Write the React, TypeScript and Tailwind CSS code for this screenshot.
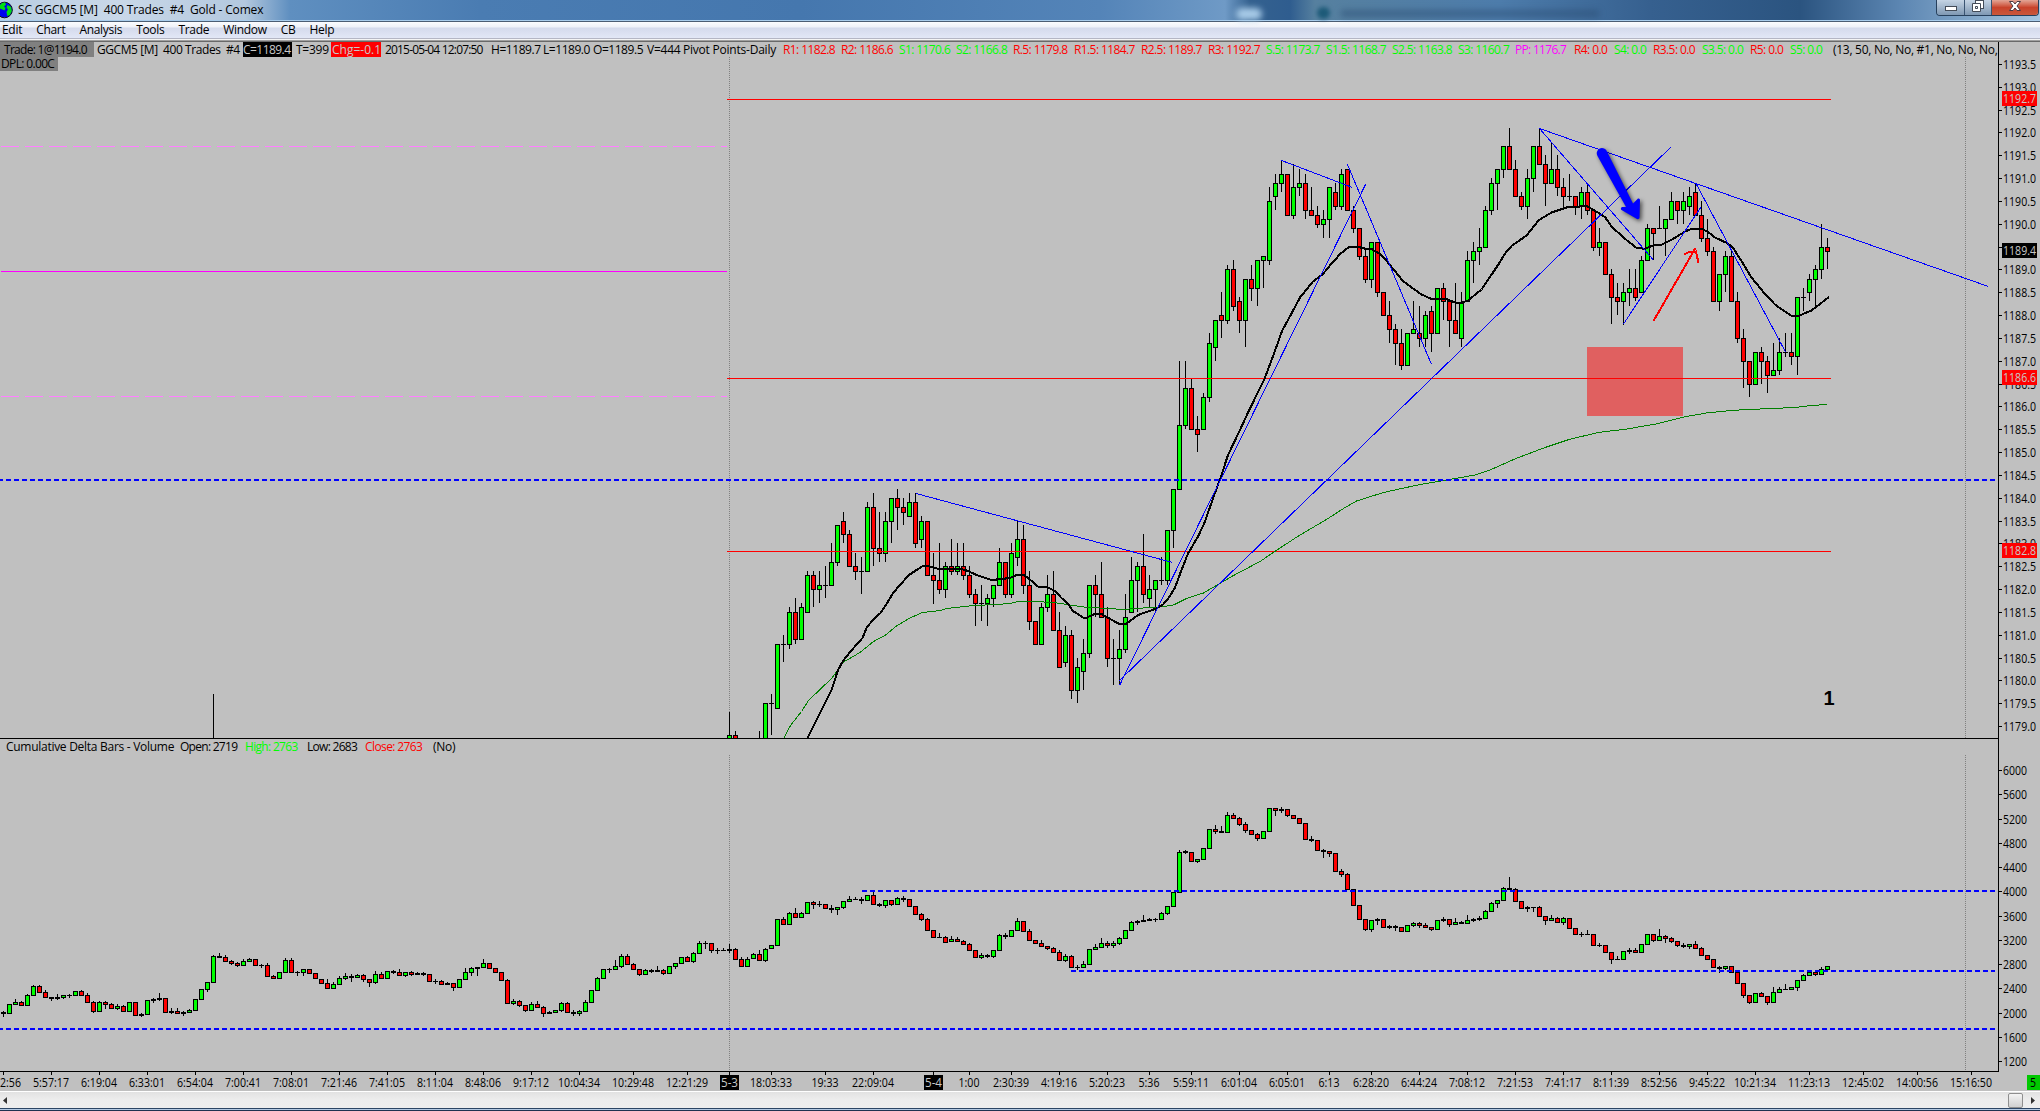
import React from 'react';

type Bar = { x: number; up: boolean; top: number; bottom: number; high: number; low: number };

const BAR_STEP = 6;
const FIRST_BAR = 3;

// "g823,850,820,853" = colour, body top, body bottom, high, low (thirds of a pixel)
const parseBars = (start: number, base: number, raw: string): Bar[] =>
  raw
    .trim()
    .split(/\s+/)
    .map((token, i) => {
      const [top, bottom, high, low] = token.slice(1).split(',').map((v) => (v ? Number(v) : undefined));
      return {
        x: FIRST_BAR + (start + i) * BAR_STEP,
        up: token[0] === 'g',
        top: base + Math.floor(top! / 3),
        bottom: base + Math.floor(bottom! / 3) + 1,
        high: base + Math.floor((high ?? top!) / 3),
        low: base + Math.ceil((low ?? bottom!) / 3),
      };
    });

const priceBars: Bar[] = [
  ...parseBars(121, 460, `g826,840,756 r826,840,813`),
  ...parseBars(
    126,
    460,
    `d838,838,813 g730,840 d730,730,702,825 g553,745 d553,553,525,606 g457,553,441,567 r457,538,414,552
    g442,538,429 g346,457,333 r346,388,333,441 g376,388,333,429 d376,376,318,414 g307,376,249 g196,307,,318
    r184,223,156,249 r223,319,210 r319,334,279,360 d334,334,291,402 g142,334,126 r142,265,99,318
    r265,280,156,306 g184,280,156,306 g115,184,,249 r115,142,87,210 r142,157,114,195 g127,169,99
    r127,250,99,264 g184,238,168,264 r184,346 r346,361,279,430 r361,388,249,402 g319,388,306,414
    r319,334,237,345 g319,334,249,345 r319,346,249,360 r346,403,318,414 r403,430,387,498 d430,430,375,483
    g415,430,402,498 g376,415,,441 g307,376,264 r307,403,,414 g280,403,249,414 g238,292,183,318
    r238,376,195,402 r376,484,333,510 r484,553 g442,553,429 g403,442,345,456 r403,511,333 r511,622,456
    g526,607,498,621 r526,691,510,717 g622,691,594,729 g580,634,537,690 g376,580,,594 r376,403,345,471
    r403,472,306 r472,595,441,621`,
  ),
  ...parseBars(
    185,
    340,
    `d955,955,897,1035 g928,955,870,1035 g832,928,762,939 g721,817,651 g679,721,666,816 r679,763,582,789
    g748,775,705,804 g721,748,,813 d721,721,651,735 g571,721,,735 g448,571,,624 g256,448,63 g145,256,63,267
    r145,268,118 r268,283,228,336 g172,268,159 g10,172,-21,186`,
  ),
  ...parseBars(
    202,
    120,
    `g601,682,,723 r586,601,516,654 g448,601,435,612 r448,559,420,573 r544,601,531,639 g478,601,,681
    r478,505,435,543 g421,505,,558 g409,421,,504 g244,421,201,435 g190,229,162,270 g163,190,121,216 r163,286
    g202,286,132,297 g190,202,147,228 r190,271,162,297 r271,286,201 r286,313,258,324 g298,313,270,354
    g202,298,,354 r217,259,189,270 g163,259,147,270 r148,271 r271,325,258,339 r325,409,,420 r409,478,390,489
    g367,478,,504 r367,517,,531 r517,586 r586,628,543,669 r628,670,612,735 r670,736,627,750 g640,736
    g628,640,543 r640,655,558,681 g586,655,573,681 r574,640,558,696 g505,640 r505,544,489,600 r544,601,,681
    r601,640,489 g550,655,516,681 g421,544,393 g394,421,366,489 g382,394,324,435 g271,382,258
    g190,271,174,285 g148,190,,270 g79,148,,174 r79,148,24 r148,229,120 r229,259,216,270 g175,259,147,297
    g79,175,,216 r79,133,24 r133,190,105,258 g148,190,66 r148,202,105,228 r202,229,174,264 d229,229,162,243
    r229,262,,285 g217,260,201,297 r217,271,189,285 r271,382,,393 g367,382,324,408 r367,463 r463,532,447,612
    r532,544,489,585`,
  ),
  ...parseBars(
    270,
    110,
    `g547,574,519,643 g535,547,477,588 r535,562,477,573 g451,547,438 g355,451,342 r355,370,,450 d355,355,288
    g328,355,,438 g274,328,246 r274,301,,342 g274,301,246,342 g259,289,231,315 r247,316,219 r316,385,273,396
    r385,424,327,438 r424,574,411 g493,574,,603 g439,493,423,546 r439,574,420 r574,685,546,699
    r685,754,657,834 r754,823,,861 g727,823 r727,754,711,822 r754,796,738,849 g781,796,699 g727,781,684,795
    d727,727,669,739 r727,739,669,765 g562,739,,795 d562,562,534,603 g508,547,492,573 g478,508,465,591
    g412,478,342,507 r412,424,384,477`,
  ),
];

const deltaBars: Bar[] = [
  ...parseBars(
    0,
    730,
    `d847,850,843,861 g823,850 g817,823,807 r817,826,813 g796,826,792 g769,796,765 r769,787,765 r787,802,780
    d802,805,,813 d801,804,792,810 g796,802,,807 d796,796,792,804 g784,796 r784,796,780 r796,817,790
    r817,844,813,849 g817,844,813 r817,823,813,837 r823,835,819 g829,835,822,840 r829,844,825 g817,844
    r817,856 d853,856,849,861 g811,853 d808,811,804,819 d805,808,789,813 r805,847 d844,847,835,852
    r844,850,834 d847,850,844,858 g841,847,838 g808,841 g778,808 g757,778,,786 g679,757,676 d679,682,669
    r682,694,676 r694,700,690,705 r700,706,696,711 g694,706,687 g688,694,684 r688,706 d706,706,702,714
    r706,739,699 r739,745,735 g727,745 g691,727,684 r691,727,684 d727,727,723,738 g718,727,,738 r718,730
    r730,745 r748,760 r760,775,747 g763,775,757 g745,763,738 g739,745,729,750 d739,742,732,756 g736,742,732
    r736,748,732,756 r748,757,,771 g733,757,723,762 r733,745,726 g724,745 d724,727,720,732 r727,736,717
    g727,736,,740 r727,733,723,738 d730,733,726 d730,733,726,738 r733,754 d754,754,748,760 r754,763,750
    d760,763,756 r760,772,,783 g748,772 g727,748,714 g715,727,711,736 d712,715,,738 g700,712,687 r700,715
    r715,727 r727,751 r751,820,747 g814,820,808,825 r814,826,810,831 r826,841,,846 g823,841,817 r823,832,814
    r832,850,828,861 d847,850,843 g841,847 g820,841,816,846 r820,847,816 d847,850,840,858 g844,850,840,856
    g817,844,810 g781,817 g745,781,741 g718,745 d718,718,714,729 g709,718,690 g679,709,672,714 r679,703,672
    r703,718,699 r718,733,,738 g721,733,717 d721,724,717,729 d721,724,708 r721,730,717,735 g709,730
    g700,709,,717 g682,700 r682,694,678 g670,694,666,699 g640,670,633 d640,640,633,657 r640,661,,667
    d661,661,654,672`,
  ),
  ...parseBars(
    120,
    790,
    `d481,481,474 d478,481,462,489 r478,508,474 r508,529,502 g508,529,502 g493,505,489 r493,511,480
    g478,511,474,516 g466,475 g388,466 r388,403,381 g370,403,366 r370,382,354 g370,382,366 g337,370
    r337,343,333,357 d343,343,333,349 r343,355 d355,358,345,369 g352,358,,375 g334,352,,357 g328,334,318
    d328,328,321 d328,331,321,342 g316,331 r316,343,303 d343,346,339,351 g331,346,,354 r331,343,,348
    g325,343,321 d325,328,318,336 r328,349 r349,373 r373,388,369,393 r388,421,384 r421,442 d442,442,429
    r442,457,438 g448,454,438 r448,454,441 r454,463,450 r463,481,459 r481,502 g496,502,489,507
    d496,499,492,504 g481,499,,504 g436,481,432 d436,439,429,447 g421,439 g394,421,384 r394,424 r424,451,417
    r451,460 r460,469,450 r469,475,,480 r475,487,471 r487,511,480 g499,511,492,516 r499,532,496
    d532,532,525,540 g523,532,513 g478,523 g472,478,462 g460,472,444 r460,466,453,474 g460,466,453,474
    g445,460,441,465 g421,445 g397,421,393 d394,397,390,405 d391,394,375 d388,391,384 d388,388,384,396
    g370,388,366 g349,370,,375 g307,349 g187,307,180 d184,187,180,192 r187,214 g208,214,,219 g175,208
    g118,175 r118,124,105,132 d124,127,108 g76,127,66 r76,85,69 r85,103,81,108 r103,121,96,129 r121,133
    r133,145,129,153 g124,145 g55,124 r55,61,,78 d58,61,51,67 r58,76,,81 r76,85 r85,100 r100,148
    d148,151,138,156 r151,181 d181,184,177,204 r184,190,,201 r190,244 r244,253,237,261 r253,298,249 r298,346
    r346,388 r388,418,,423 g391,418,,426 d388,391,384,405 r388,412 d409,412,405,417 d409,412,405,423
    r412,424 g406,424 g400,406,396,411 r400,406,396,414 r406,412,400 r412,418,,423 g391,418 d388,391,381,396
    r388,403,,410 g397,403,384 d397,400,393 g391,400,375 d388,391,384,396 d385,388,378,393 g364,385,360
    g340,364,336 g331,340,,354 g295,331,291 d295,298,261 r298,334,294 r334,355 d352,355,348,366
    d352,352,,366 r352,379,348 r379,391,,405 g385,391,375 r385,397,381 g385,397,381,405 r385,415 r415,433
    d433,433,426,441 d433,433,420 r433,466 d466,466,459,471 r466,487 r487,508,,522 d508,508,498`,
  ),
  ...parseBars(
    270,
    680,
    `g814,838 d811,814,805,820 r811,817,804 g793,817 g763,793 r763,781,,786 g769,781,747 r769,775,765,789
    r775,784,771,789 r784,796,,801 d796,799,790,804 g793,799,,807 r793,805,783 r805,826,801 r826,838
    r838,862 d862,865,858,879 g859,865,,870 r859,877 r877,910 r910,946,,954 r946,967,,972 g940,967
    r940,949,936 r949,967,,975 g937,967,921 g928,937,921 d928,928,912 g922,928 g901,922,,933 g886,901,882
    g877,886,874 r877,883,873,888 g868,883,861 g859,868`,
  ),
];

const fastAverage =
  '807.5,738 815,723 831.5,690 838,670 843,661 850,652 862.5,638 867,627 873,620 880.5,613 886,605 893,593 900,585 909,575 916.5,570 923,566 927,565.5 933,567.5 941.5,569.5 950,568.5 960,568.5 968,571 976.5,575 990,579.5 996.5,579.5 1010,578 1016.5,575 1024,575 1030.5,580 1038,586.5 1048,587.5 1055,591 1061.5,598 1067,602.5 1073,611 1083,617.5 1087,617.5 1093.5,614.5 1101.5,614 1108,618 1118.5,623.5 1126.5,623.5 1138,615 1156.5,608.5 1163,604.5 1168,599 1175,587.5 1181.5,570 1188,553.5 1198,536.5 1204,524 1213,498.5 1221.5,475 1228,455 1240,430 1248,412.5 1264.5,379 1273.5,355 1282,331 1288,320 1300,297.5 1313,281.5 1323,274 1331.5,263.5 1335,260 1340,254 1349,247 1358.5,247 1366.5,249 1371.5,249 1381.5,255 1390,265 1402.5,280.5 1413,288.5 1421.5,294.5 1431.5,299 1445,298.5 1455,302.5 1461.5,302.5 1468,300.5 1481.5,289.5 1493,272.5 1500,262 1505,253.5 1511.5,246 1526.5,235.5 1539,220 1551.5,212.5 1566.5,207.5 1586.5,206 1593,209.5 1605,217 1611.5,226.5 1624,238 1636,247.5 1644.5,249 1653,245.5 1662,244.5 1672,239.5 1686,231 1693,228.5 1701.5,228.5 1708,232 1715,237.5 1727,243 1732.5,247 1743,263.5 1751.5,277.5 1765,294 1775.5,305 1791,315.5 1799.5,315.5 1811.5,310.5 1829,297';

const slowAverage =
  '784,738 790.5,725.5 801.5,711.5 808.5,700.5 831.5,678.5 843.5,662 860,652.5 873.5,641.5 885,635.5 896.5,626 910,618 922.5,612.5 940,610.5 946.5,608.5 973.5,605.5 996.5,604.5 1010,603.5 1018.5,601.5 1033.5,601.5 1053.5,602.5 1083.5,607 1123.5,609.5 1135,608.5 1160,607 1173.5,605 1186.5,598.5 1203.5,593 1233.5,575.5 1260,561.5 1280,548 1300,535 1326.5,519.5 1343.5,508.5 1356.5,501 1383.5,492.5 1420,484.5 1444,480.5 1475,475 1490,470 1516,458.5 1545,447.5 1569,439.5 1598,432.5 1627,429 1658.5,423.5 1686,416.5 1706.5,413 1730.5,410.5 1748,409.5 1772,408.5 1794.5,407.5 1811.5,405.5 1827,404.5';

const trendLines = [
  [916, 493.5, 1172.5, 562.5],
  [1119.5, 685.5, 1365.5, 184.5],
  [1119.5, 680.5, 1671, 147],
  [1281.5, 160.5, 1352.5, 187.5],
  [1347.5, 164.5, 1431.5, 364.5],
  [1539.5, 128.5, 1988.5, 286.5],
  [1539.5, 128.5, 1653, 259.5],
  [1623.5, 324, 1701, 207],
  [1696, 183.5, 1785.5, 352],
];

const timeLabels: [number, string][] = [
  [51, '5:57:17'], [99, '6:19:04'], [147, '6:33:01'], [195, '6:54:04'], [243, '7:00:41'], [291, '7:08:01'],
  [339, '7:21:46'], [387, '7:41:05'], [435, '8:11:04'], [483, '8:48:06'], [531, '9:17:12'], [579, '10:04:34'],
  [633, '10:29:48'], [687, '12:21:29'], [771, '18:03:33'], [825, '19:33'], [873, '22:09:04'], [969, '1:00'],
  [1011, '2:30:39'], [1059, '4:19:16'], [1107, '5:20:23'], [1149, '5:36'], [1191, '5:59:11'], [1239, '6:01:04'],
  [1287, '6:05:01'], [1329, '6:13'], [1371, '6:28:20'], [1419, '6:44:24'], [1467, '7:08:12'], [1515, '7:21:53'],
  [1563, '7:41:17'], [1611, '8:11:39'], [1659, '8:52:56'], [1707, '9:45:22'], [1755, '10:21:34'],
  [1809, '11:23:13'], [1863, '12:45:02'], [1917, '14:00:56'], [1971, '15:16:50'],
];

const dayLabels: [number, string][] = [[729, '5-3'], [933, '5-4']];

const priceLabels = Array.from({ length: 30 }, (_, i) => ({
  text: (1193.5 - i * 0.5).toFixed(1),
  y: Math.round(64 + i * 22.83),
}));

const deltaLabels = Array.from({ length: 13 }, (_, i) => ({
  text: String(6000 - i * 400),
  y: Math.round(770 + i * 24.25),
}));

const priceTags = [
  { y: 99, text: '1192.7', color: '#ff0000' },
  { y: 251, text: '1189.4', color: '#000000' },
  { y: 378, text: '1186.6', color: '#ff0000' },
  { y: 551, text: '1182.8', color: '#ff0000' },
];

const RED = 'text-[#ff0000] tracking-[-0.6px]';
const GREEN = 'text-[#00ff00] tracking-[-0.6px]';

// [slot width, text, classes]
const studyFields: [number, string, string][] = [
  [146, 'GGCM5 [M]\u00a0 400 Trades\u00a0 #4', 'tracking-[-0.42px]'],
  [49, 'C=1189.4', 'bg-black text-[#c8c8c8] tracking-[-0.55px]'],
  [39, 'T=399', 'pl-1 tracking-[-0.25px]'],
  [50, 'Chg=-0.1', 'bg-[#ff0000] text-[#c8c8c8] pl-px tracking-[0px]'],
  [110, '2015-05-04 12:07:50', 'pl-1 tracking-[-0.82px]'],
  [52, 'H=1189.7', 'tracking-[-0.45px]'],
  [50, 'L=1189.0', 'tracking-[-0.45px]'],
  [54, 'O=1189.5', 'tracking-[-0.45px]'],
  [36, 'V=444', 'tracking-[-0.25px]'],
  [100, 'Pivot Points-Daily', 'tracking-[-0.22px]'],
  [58, 'R1: 1182.8', RED],
  [58, 'R2: 1186.6', RED],
  [57, 'S1: 1170.6', GREEN],
  [57, 'S2: 1166.8', GREEN],
  [61, 'R.5: 1179.8', RED],
  [67, 'R1.5: 1184.7', RED],
  [67, 'R2.5: 1189.7', RED],
  [58, 'R3: 1192.7', RED],
  [60, 'S.5: 1173.7', GREEN],
  [66, 'S1.5: 1168.7', GREEN],
  [66, 'S2.5: 1163.8', GREEN],
  [57, 'S3: 1160.7', GREEN],
  [59, 'PP: 1176.7', 'text-[#ff00ff] tracking-[-0.7px]'],
  [40, 'R4: 0.0', RED],
  [39, 'S4: 0.0', GREEN],
  [49, 'R3.5: 0.0', RED],
  [48, 'S3.5: 0.0', GREEN],
  [40, 'R5: 0.0', RED],
  [43, 'S5: 0.0', GREEN],
  [166, '(13, 50, No, No, #1, No, No, No,', 'tracking-[-0.28px]'],
];

const deltaFields: [number, string, string][] = [
  [174, 'Cumulative Delta Bars - Volume', 'tracking-[-0.28px]'],
  [65, 'Open: 2719', 'tracking-[-0.72px]'],
  [62, 'High: 2763', 'text-[#00ff00] tracking-[-0.68px]'],
  [58, 'Low: 2683', 'tracking-[-0.7px]'],
  [68, 'Close: 2763', 'text-[#ff0000] tracking-[-0.6px]'],
  [40, '(No)', 'tracking-[-0.3px]'],
];

// digits are 6px wide, punctuation 3px
const labelWidth = (text: string) => [...text].reduce((sum, c) => sum + (/\d/.test(c) ? 6 : 3), 0);

const Label: React.FC<{ x: number; y: number; text: string; middle?: boolean; fill?: string }> = ({
  x,
  y,
  text,
  middle,
  fill,
}) => (
  <text
    x={middle ? x - labelWidth(text) / 2 : x}
    y={y}
    fill={fill}
    textLength={labelWidth(text)}
    lengthAdjust="spacingAndGlyphs"
  >
    {text}
  </text>
);

const Candles: React.FC<{ bars: Bar[] }> = ({ bars }) => (
  <g>
    {bars.map((b) => (
      <g key={b.x}>
        <rect x={b.x} y={b.high} width={1} height={b.low - b.high} />
        <rect x={b.x - 2} y={b.top} width={5} height={b.bottom - b.top} />
        {b.bottom - b.top > 2 && (
          <rect x={b.x - 1} y={b.top + 1} width={3} height={b.bottom - b.top - 2} fill={b.up ? '#00ff00' : '#ff0000'} />
        )}
      </g>
    ))}
  </g>
);

const Dashed: React.FC<{ x: number; y: number }> = ({ x, y }) => (
  <path d={`M${x} ${y}H1995`} stroke="#0000ff" strokeWidth={2} strokeDasharray="5 3" />
);

const Fields: React.FC<{ fields: [number, string, string][] }> = ({ fields }) => (
  <>
    {fields.map(([width, text, cls], i) => (
      <span key={i} className={`h-[15px] shrink-0 overflow-hidden whitespace-pre ${cls}`} style={{ width }}>
        {text}
      </span>
    ))}
  </>
);

const TitleBar: React.FC = () => (
  <div className="relative flex h-[21px] items-start border-b border-[#a9cdec] bg-[linear-gradient(90deg,#b9cde2_0px,#c9d8e8_120px,#b3c8de_245px,#5f8fc0_290px,#4a7cb2_480px,#4577ae_800px,#5484b8_1100px,#6f9ac6_1225px,#34618f_1250px,#2f5d8f_1290px,#56809f_1315px,#4d7cab_1500px,#36608f_1650px,#2b5480_1800px,#5c86b2_1900px,#a7c6e0_2040px)]">
    {/* windows behind the glass */}
    <div className="absolute left-[1236px] top-[8px] h-[12px] w-[26px] rounded-full bg-[#a8cbe8] blur-[3px]" />
    <div className="absolute left-[1317px] top-[7px] h-[12px] w-[13px] rounded-full bg-[#1d5a78] blur-[2px]" />
    <div className="absolute left-[1341px] top-[10px] h-[7px] w-[258px] bg-[#284a70]/50 blur-[3px]" />
    <svg width="14" height="20" viewBox="0 0 14 20">
      <circle cx="4.500" cy="10" r="7.800" fill="#0000f0" stroke="#111" strokeWidth="1" />
      <path d="M0 5l2-2 3-.500 1 2-2 2 1.500 1.500-1 2.500-2-1-2.500-1zM7.500 5l3.500 2 .800 4-2 4-2.500 1-.800-4 1.500-2.500-1.500-2z" fill="#00e010" />
    </svg>
    <span className="ml-1 text-[12px] leading-[19px] tracking-[-0.16px] whitespace-pre">
      SC GGCM5 [M]{'  '}400 Trades{'  '}#4{'  '}Gold - Comex
    </span>
    <div className="ml-auto mr-px flex h-4 overflow-hidden rounded-b-[4px] border border-t-0 border-[#27405c]">
      <div className="flex w-[28px] justify-center border-r border-[#3a5472] bg-linear-to-b from-[#c5d4e4] to-[#7f98b3]">
        <svg width="14" height="15" viewBox="0 0 14 15">
          <rect x="1.500" y="6.500" width="11" height="4" fill="#fff" stroke="#444c58" />
        </svg>
      </div>
      <div className="flex w-[27px] justify-center border-r border-[#3a5472] bg-linear-to-b from-[#c5d4e4] to-[#7f98b3]">
        <svg width="14" height="15" viewBox="0 0 14 15" fill="#fff" stroke="#444c58">
          <rect x="4.500" y="0.500" width="8" height="8" />
          <path d="M1.500 3.500h8v8h-8zM4.500 6.500v2h2v-2z" fillRule="evenodd" />
        </svg>
      </div>
      <div className="flex w-[46px] justify-center bg-linear-to-b from-[#e2a596] via-[#c8432b] to-[#c9583c]">
        <svg width="14" height="15" viewBox="0 0 14 15">
          <path d="M1.500 1.500h3.500l2 2.500 2-2.500h3.500l-3.500 4.500 3.500 4.500h-3.500l-2-2.500-2 2.500h-3.500l3.500-4.500z" fill="#fff" stroke="#4a3a42" />
        </svg>
      </div>
    </div>
  </div>
);

const MenuBar: React.FC = () => (
  <div className="flex h-[21px] flex-col border-t border-[#4b5d73]">
    <div className="flex h-4 items-center gap-[14px] bg-[linear-gradient(180deg,#fbfcfe_0px,#eef1f8_5px,#d4daec_6px,#e2e7f6_16px)] pl-[2px] text-[12px] leading-[16px] tracking-[-0.3px]">
      {['Edit', 'Chart', 'Analysis', 'Tools', 'Trade', 'Window', 'CB', 'Help'].map((item) => (
        <span key={item}>{item}</span>
      ))}
    </div>
    <div className="h-px bg-[#b4b6c4]" />
    <div className="h-px bg-[#f4f4f4]" />
    <div className="h-px bg-[#a0a0a0]" />
    <div className="h-px bg-[#696969]" />
  </div>
);

const Chart: React.FC = () => (
  <svg
    className="block text-[12px]"
    width="2040"
    height="1049"
    viewBox="0 42 2040 1049"
    shapeRendering="crispEdges"
  >
    <defs>
      <clipPath id="price-pane">
        <rect x="0" y="42" width="1998" height="696" />
      </clipPath>
    </defs>

    {/* session separators */}
    <g stroke="#808080" strokeDasharray="1 1">
      <path d="M729.500 57V738M729.500 755V1071M1965.500 57V738M1965.500 755V1071" />
    </g>

    {/* previous session pivots */}
    <path d="M1 146.500H727M1 396.500H727" stroke="#ff80ff" strokeDasharray="18 6" />
    <path d="M1 271.500H727" stroke="#ff00ff" />

    <rect x="1587" y="347" width="96" height="69" fill="#e06060" />

    <g clipPath="url(#price-pane)">
      <rect x="213" y="694" width="1" height="44" />
      <Candles bars={priceBars} />
    </g>
    <Candles bars={deltaBars} />

    <path d="M727 99.500H1831M727 378.500H1831M727 551.500H1831" stroke="#ff0000" />

    <g fill="none" clipPath="url(#price-pane)">
      <polyline points={slowAverage} stroke="#008000" />
      <polyline points={fastAverage} stroke="#000" strokeWidth={2} />
      {trendLines.map(([x1, y1, x2, y2], i) => (
        <line key={i} x1={x1} y1={y1} x2={x2} y2={y2} stroke="#0000ff" />
      ))}
      <path d="M1653.500 321L1695.500 248M1684 254.500L1688 252.500L1696 251.500L1698.500 263" stroke="#ff0000" strokeWidth={2} />
    </g>

    <Dashed x={-2} y={480} />
    <Dashed x={862} y={891} />
    <Dashed x={1071} y={971} />
    <Dashed x={-2} y={1029} />

    {/* marker arrow */}
    <g shapeRendering="auto" className="drop-shadow-[2px_2px_2px_rgba(0,0,0,0.6)]" fill="#0000ff">
      <path d="M1597.500 156a5.200 5.200 0 0 1 9-5.500L1633 203.500L1638 198.500Q1640 198 1640 200L1639.500 218Q1639 219.500 1637 219L1621.500 210Q1620 208.500 1622 207L1626 207Z" />
    </g>

    <text x="1829" y="705" textAnchor="middle" className="font-['Liberation_Sans'] text-[20px] font-bold">
      1
    </text>

    {/* frame */}
    <path d="M0 738.500H1998M0 1071.500H1999M1998.500 42V1072" stroke="#000" />

    {[...priceLabels, ...deltaLabels].map(({ text, y }) => (
      <g key={text}>
        <rect x="1999" y={y} width="3" height="1" />
        <Label x={2003} y={y + 5} text={text} />
      </g>
    ))}
    {priceTags.map(({ y, text, color }) => (
      <g key={text}>
        <rect x="2002" y={y - 8} width="35" height="15" fill={color} />
        <Label x={2003} y={y + 4} text={text} fill="#c8c8c8" />
      </g>
    ))}

    {timeLabels.map(([x, text]) => (
      <g key={x}>
        <rect x={x} y="1072" width="1" height="3" />
        <Label x={x} y={1087} text={text} middle />
      </g>
    ))}
    <rect x="3" y="1072" width="1" height="3" />
    <Label x={0} y={1087} text="2:56" />
    {dayLabels.map(([x, text]) => (
      <g key={x}>
        <rect x={x} y="1072" width="1" height="3" />
        <rect x={x - 9} y="1075" width="19" height="15" />
        <text x={x - 8} y="1087" textLength={17} lengthAdjust="spacingAndGlyphs" fill="#c8c8c8">
          {text}
        </text>
      </g>
    ))}
    <rect x="2027" y="1075" width="13" height="15" fill="#00c800" />
    <Label x={2030} y={1087} text="5" />
  </svg>
);

const ScrollBar: React.FC = () => (
  <div className="flex h-[17px] items-center justify-between border-t border-white bg-linear-to-b from-[#e2e2e2] via-[#ededed] to-[#eeeeee] pl-[3px] pr-[5px]">
    <svg width="4" height="7" viewBox="0 0 4 7">
      <path d="M4 0v7L0 3.500z" fill="#333" />
    </svg>
    <div className="flex items-center gap-[8px]">
      <div className="h-[15px] w-[15px] rounded-[2px] border border-[#8f8f8f] bg-linear-to-b from-[#f4f4f4] to-[#d0d0d0]" />
      <svg width="4" height="7" viewBox="0 0 4 7">
        <path d="M0 0v7l4-3.500z" fill="#333" />
      </svg>
    </div>
  </div>
);

const App: React.FC = () => {
  return (
    <div className="flex h-[1111px] w-[2040px] flex-col overflow-hidden bg-[#c0c0c0] font-['Open_Sans',sans-serif] text-black">
      <TitleBar />
      <MenuBar />
      <div className="relative">
        <Chart />
        {/* study read-outs drawn over the chart */}
        <div className="absolute left-0 top-0 flex h-[15px] w-[1998px] overflow-hidden text-[12px] leading-[15px]">
          <span className="mr-[3px] w-[94px] shrink-0 bg-[#808080] pl-1 tracking-[-0.72px]">Trade: 1@1194.0</span>
          <Fields fields={studyFields} />
        </div>
        <div className="absolute left-0 top-[15px] h-[14px] w-[58px] bg-[#808080] pl-px text-[12px] leading-[14px] tracking-[-0.65px]">
          DPL: 0.00C
        </div>
        <div className="absolute left-[6px] top-[697px] flex text-[12px] leading-[15px]">
          <Fields fields={deltaFields} />
        </div>
      </div>
      <ScrollBar />
      <div className="flex h-[3px] flex-col">
        <div className="h-px bg-[#2c4564]" />
        <div className="h-px bg-[#b4cae4]" />
        <div className="h-px bg-[#1f3350]" />
      </div>
    </div>
  );
};

export default App;
